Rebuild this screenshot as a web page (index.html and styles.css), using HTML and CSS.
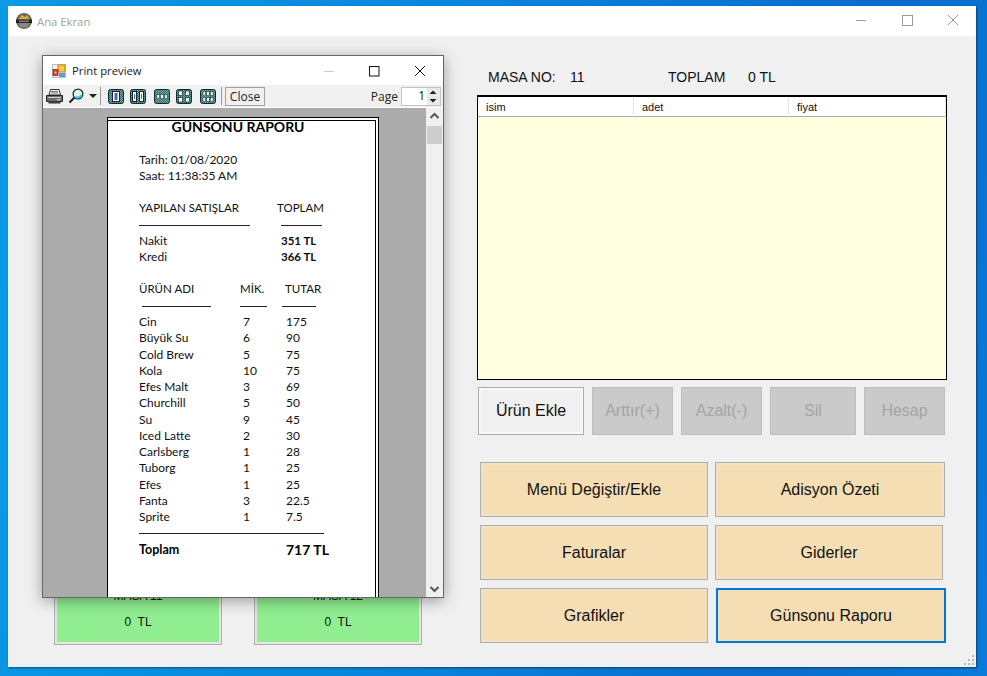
FILE: index.html
```html
<!DOCTYPE html>
<html>
<head>
  <meta charset="UTF-8">
  <title>Ana Ekran</title>
  <link rel="stylesheet" href="styles.css">
</head>
<body>
  <div class="window">
    <div class="titlebar">
      <svg class="app-logo" width="18" height="18" viewBox="0 0 18 18">
        <circle cx="9" cy="9" r="8" fill="#6b675f"/>
        <path d="M3 7.5 L7 3 L10 5 L12 3 L15 7.5 Z" fill="#d9a93f"/>
        <rect x="1" y="7.5" width="16" height="3.5" fill="#24211f"/>
        <rect x="4" y="8.7" width="10" height="1" fill="#aaa"/>
        <path d="M3 11 H15 L12 15.5 H6 Z" fill="#8c8880"/>
      </svg>
      <span class="app-title">Ana Ekran</span>
      <div class="win-controls">
        <svg width="46" height="30" viewBox="0 0 46 30"><path d="M18 14.5 H28" stroke="#999" fill="none"/></svg>
        <svg width="46" height="30" viewBox="0 0 46 30"><rect x="18.5" y="9.5" width="10" height="10" stroke="#999" fill="none"/></svg>
        <svg width="46" height="30" viewBox="0 0 46 30"><path d="M18 9 L28 19 M28 9 L18 19" stroke="#999" fill="none"/></svg>
      </div>
    </div>

    <div class="content">
      <div class="left-col">
        <div class="table-card">
          <div class="table-inner"><span class="table-name">MASA 11</span><span class="table-sum">0&nbsp; TL</span></div>
        </div>
        <div class="table-card">
          <div class="table-inner"><span class="table-name">MASA 12</span><span class="table-sum">0&nbsp; TL</span></div>
        </div>
      </div>

      <div class="right-col">
        <div class="info-row">
          <span class="info-a">MASA NO:</span>
          <span class="info-b">11</span>
          <span class="info-c">TOPLAM</span>
          <span class="info-d">0 TL</span>
        </div>
        <div class="list">
          <div class="list-head">
            <span class="head-cell">isim</span>
            <span class="head-cell">adet</span>
            <span class="head-cell">fiyat</span>
          </div>
        </div>
        <div class="tool-row">
          <button class="btn btn-add">Ürün Ekle</button>
          <button class="btn btn-off w81">Arttır(+)</button>
          <button class="btn btn-off w81">Azalt(-)</button>
          <button class="btn btn-off w86">Sil</button>
          <button class="btn btn-off w81">Hesap</button>
        </div>
        <div class="menu-grid">
          <button class="btn btn-menu">Menü Değiştir/Ekle</button>
          <button class="btn btn-menu">Adisyon Özeti</button>
          <button class="btn btn-menu">Faturalar</button>
          <button class="btn btn-menu btn-short">Giderler</button>
          <button class="btn btn-menu">Grafikler</button>
          <button class="btn btn-menu btn-focus">Günsonu Raporu</button>
        </div>
      </div>
    </div>

    <svg class="grip" width="12" height="12" viewBox="0 0 12 12" fill="#b5b5b5">
      <rect x="8" y="0" width="2" height="2"/><rect x="4" y="4" width="2" height="2"/><rect x="8" y="4" width="2" height="2"/>
      <rect x="0" y="8" width="2" height="2"/><rect x="4" y="8" width="2" height="2"/><rect x="8" y="8" width="2" height="2"/>
    </svg>
  </div>

  <!-- print preview dialog sits over the main window -->
  <div class="preview">
    <div class="pv-title">
      <svg width="14" height="14" viewBox="0 0 14 14">
        <rect x=".5" y=".5" width="13" height="13" fill="#f2f2f2" stroke="#bdbdbd"/>
        <rect x="6" y="1" width="7" height="7" fill="#f7c93e" stroke="#c98a1a"/>
        <rect x="1" y="5.5" width="5" height="6" fill="#d8362a" stroke="#8f1f18" stroke-width=".7"/>
        <rect x="2.5" y="7.5" width="2" height="2" fill="#f3d0c8"/>
        <rect x="7" y="9" width="6" height="4" fill="#5a9be8"/>
      </svg>
      <span class="pv-name">Print preview</span>
      <div class="pv-controls">
        <svg width="46" height="28" viewBox="0 0 46 28"><path d="M19 14.5 H29" stroke="#ccc" fill="none"/></svg>
        <svg width="46" height="28" viewBox="0 0 46 28"><rect x="18.5" y="9.5" width="9.5" height="9.5" stroke="#111" fill="none"/></svg>
        <svg width="46" height="28" viewBox="0 0 46 28"><path d="M18 9 L28 19 M28 9 L18 19" stroke="#111" fill="none"/></svg>
      </div>
    </div>

    <div class="pv-toolbar">
      <svg class="ico-print" width="17" height="15" viewBox="0 0 17 15">
        <path d="M4.5 .5 H13 L14.5 6 H3 Z" fill="#f4f4f4" stroke="#333"/>
        <path d="M5 2.5 H12 M5 4 H12" stroke="#777"/>
        <path d="M.5 6.5 H16.5 V12.5 H.5 Z" fill="#6e6e6e" stroke="#222"/>
        <path d="M2 8.5 H15" stroke="#cfcfcf"/>
        <path d="M2.5 12 H14.5 V14.5 H2.5 Z" fill="#3a3a3a"/>
        <rect x="11" y="10" width="3" height="1.5" fill="#e6d23c"/>
      </svg>
      <svg class="ico-lens" width="16" height="16" viewBox="0 0 16 16">
        <circle cx="10" cy="6" r="4.9" fill="#d8f4fb" stroke="#222" stroke-width="1.2"/>
        <path d="M6.5 8.5 A4.5 4.5 0 0 0 13.5 7" stroke="#35c8e8" stroke-width="2" fill="none"/>
        <path d="M1.5 14.5 L6.5 9.5" stroke="#222" stroke-width="2.2"/>
      </svg>
      <svg class="ico-drop" width="8" height="4" viewBox="0 0 8 4"><path d="M0 0 H8 L4 4 Z" fill="#222"/></svg>
      <span class="tb-sep sep-a"></span>

      <svg class="ico-page gap-a" width="16" height="15" viewBox="0 0 16 15">
        <defs>
          <pattern id="dither" width="2" height="2" patternUnits="userSpaceOnUse">
            <rect width="2" height="2" fill="#2f6f6f"/>
            <rect width="1" height="1" fill="#6fa5a5"/>
            <rect x="1" y="1" width="1" height="1" fill="#6fa5a5"/>
          </pattern>
        </defs>
        <rect x=".5" y=".5" width="15" height="14" rx="2" fill="url(#dither)" stroke="#15282a"/>
        <rect x="4.5" y="2.5" width="7" height="10" fill="#fff" stroke="#15282a"/>
        <rect x="6.5" y="4" width="3" height="7" fill="#5a5ac8"/>
      </svg>
      <svg class="ico-page gap-b" width="16" height="15" viewBox="0 0 16 15">
        <rect x=".5" y=".5" width="15" height="14" rx="2" fill="url(#dither)" stroke="#15282a"/>
        <rect x="2.5" y="2.5" width="4" height="10" fill="#fff" stroke="#15282a"/>
        <rect x="9.5" y="2.5" width="4" height="10" fill="#fff" stroke="#15282a"/>
        <rect x="4" y="5" width="1" height="5" fill="#5a5ac8"/>
        <rect x="11" y="5" width="1" height="5" fill="#5a5ac8"/>
      </svg>
      <svg class="ico-page gap-a" width="16" height="15" viewBox="0 0 16 15">
        <rect x=".5" y=".5" width="15" height="14" rx="2" fill="url(#dither)" stroke="#15282a"/>
        <rect x="3" y="5.5" width="2.4" height="4" fill="#fff" stroke="#15282a" stroke-width=".5"/>
        <rect x="6.8" y="5.5" width="2.4" height="4" fill="#fff" stroke="#15282a" stroke-width=".5"/>
        <rect x="10.6" y="5.5" width="2.4" height="4" fill="#fff" stroke="#15282a" stroke-width=".5"/>
      </svg>
      <svg class="ico-page gap-b" width="16" height="15" viewBox="0 0 16 15">
        <rect x=".5" y=".5" width="15" height="14" rx="2" fill="url(#dither)" stroke="#15282a"/>
        <rect x="2.5" y="2" width="4" height="4.5" fill="#fff" stroke="#15282a" stroke-width=".7"/>
        <rect x="9.5" y="2" width="4" height="4.5" fill="#fff" stroke="#15282a" stroke-width=".7"/>
        <rect x="2.5" y="8.5" width="4" height="4.5" fill="#fff" stroke="#15282a" stroke-width=".7"/>
        <rect x="9.5" y="8.5" width="4" height="4.5" fill="#fff" stroke="#15282a" stroke-width=".7"/>
      </svg>
      <svg class="ico-page gap-last" width="16" height="15" viewBox="0 0 16 15">
        <rect x=".5" y=".5" width="15" height="14" rx="2" fill="url(#dither)" stroke="#15282a"/>
        <rect x="3" y="2.5" width="2.4" height="4" fill="#fff" stroke="#15282a" stroke-width=".5"/>
        <rect x="6.8" y="2.5" width="2.4" height="4" fill="#fff" stroke="#15282a" stroke-width=".5"/>
        <rect x="10.6" y="2.5" width="2.4" height="4" fill="#fff" stroke="#15282a" stroke-width=".5"/>
        <rect x="3" y="8.5" width="2.4" height="4" fill="#fff" stroke="#15282a" stroke-width=".5"/>
        <rect x="6.8" y="8.5" width="2.4" height="4" fill="#fff" stroke="#15282a" stroke-width=".5"/>
        <rect x="10.6" y="8.5" width="2.4" height="4" fill="#fff" stroke="#15282a" stroke-width=".5"/>
      </svg>
      <span class="tb-sep sep-b"></span>
      <span class="tb-close">Close</span>

      <span class="tb-page">Page</span>
      <div class="spin">
        <span class="spin-val">1</span>
        <div class="spin-btns">
          <svg width="12" height="8" viewBox="0 0 12 8"><path d="M2.5 6 L6 2.5 L9.5 6 Z" fill="#222"/></svg>
          <svg width="12" height="8" viewBox="0 0 12 8"><path d="M2.5 2 L6 5.5 L9.5 2 Z" fill="#222"/></svg>
        </div>
      </div>
    </div>

    <div class="pv-body">
      <div class="pv-stage">
        <div class="paper">
          <div class="rp-title">GÜNSONU RAPORU</div>
          <div class="rp-line"></div>
          <div class="rp-line">Tarih: 01/08/2020</div>
          <div class="rp-line">Saat: 11:38:35 AM</div>
          <div class="rp-line"></div>
          <div class="rp-sum rp-caps"><span>YAPILAN SATIŞLAR</span><span>TOPLAM</span></div>
          <div class="rp-rule"><i class="r-sales"></i><i class="r-total"></i></div>
          <div class="rp-sum"><span>Nakit</span><b class="sum-val">351 TL</b></div>
          <div class="rp-sum"><span>Kredi</span><b class="sum-val">366 TL</b></div>
          <div class="rp-line"></div>
          <div class="rp-row rp-head rp-caps"><span>ÜRÜN ADI</span><span>MİK.</span><span>TUTAR</span></div>
          <div class="rp-rule"><i class="r-name"></i><i class="r-qty"></i><i class="r-amt"></i></div>
          <div class="rp-row"><span>Cin</span><span>7</span><span>175</span></div>
          <div class="rp-row"><span>Büyük Su</span><span>6</span><span>90</span></div>
          <div class="rp-row"><span>Cold Brew</span><span>5</span><span>75</span></div>
          <div class="rp-row"><span>Kola</span><span>10</span><span>75</span></div>
          <div class="rp-row"><span>Efes Malt</span><span>3</span><span>69</span></div>
          <div class="rp-row"><span>Churchill</span><span>5</span><span>50</span></div>
          <div class="rp-row"><span>Su</span><span>9</span><span>45</span></div>
          <div class="rp-row"><span>Iced Latte</span><span>2</span><span>30</span></div>
          <div class="rp-row"><span>Carlsberg</span><span>1</span><span>28</span></div>
          <div class="rp-row"><span>Tuborg</span><span>1</span><span>25</span></div>
          <div class="rp-row"><span>Efes</span><span>1</span><span>25</span></div>
          <div class="rp-row"><span>Fanta</span><span>3</span><span>22.5</span></div>
          <div class="rp-row"><span>Sprite</span><span>1</span><span>7.5</span></div>
          <div class="rp-rule"><i class="r-all"></i></div>
          <div class="rp-row rp-foot"><b>Toplam</b><span></span><b class="foot-val">717 TL</b></div>
        </div>
      </div>
      <div class="pv-scroll">
        <svg width="17" height="16" viewBox="0 0 17 16"><path d="M4.5 10 L8.5 6 L12.5 10" stroke="#555" stroke-width="2" fill="none"/></svg>
        <div class="pv-thumb"></div>
        <svg class="scroll-down" width="17" height="16" viewBox="0 0 17 16"><path d="M4.5 6 L8.5 10 L12.5 6" stroke="#555" stroke-width="2" fill="none"/></svg>
      </div>
    </div>
  </div>
</body>
</html>
```

FILE: styles.css
```css
html, body {
  margin: 0;
  height: 100%;
}

body {
  position: relative;
  width: 987px;
  height: 676px;
  overflow: hidden;
  background: linear-gradient(100deg, #0a9be6 0%, #0a84dc 45%, #0a6ccc 80%, #0a7ad8 100%);
  font-family: "Liberation Sans", Arial, sans-serif;
}

/* main window */
.window {
  position: absolute;
  left: 8px;
  top: 6px;
  width: 968px;
  height: 661px;
  background: #f0f0f0;
  box-shadow: 1px 1px 2px rgba(0, 0, 0, 0.45);
  display: flex;
  flex-direction: column;
}

.titlebar {
  height: 30px;
  background: #fff;
  display: flex;
  align-items: center;
  padding-left: 7px;
  flex-shrink: 0;
}

.app-title {
  margin-left: 4px;
  font-family: "Open Sans", sans-serif;
  font-size: 11.3px;
  color: #a0a0a0;
}

.win-controls {
  margin-left: auto;
  display: flex;
}

.win-controls svg {
  display: block;
}

.content {
  flex: 1;
  display: grid;
  grid-template-columns: 469px 1fr;
  min-height: 0;
}

/* green table cards, mostly under the preview */
.left-col {
  display: flex;
  align-items: flex-end;
  gap: 32px;
  padding: 0 0 22px 46px;
}

.table-card {
  width: 168px;
  height: 85px;
  box-sizing: border-box;
  border: 1px solid #adadad;
  padding: 2px;
  background: #e6e6e6;
}

.table-inner {
  height: 100%;
  background: #90ee90;
  display: flex;
  flex-direction: column;
  align-items: center;
  font-size: 12px;
  color: #111;
}

.table-name {
  margin-top: 26px;
}

.table-sum {
  margin-top: 12px;
}

.right-col {
  padding-top: 32px;
}

.info-row {
  display: flex;
  height: 18px;
  align-items: center;
  font-size: 14px;
  color: #111;
  margin-bottom: 9px;
}

.info-a { margin-left: 11px; width: 82px; }
.info-b { width: 98px; }
.info-c { width: 80px; }

.list {
  width: 470px;
  height: 285px;
  box-sizing: border-box;
  border: 1px solid #000;
  border-top-width: 2px;
  background: #ffffe0;
}

.list-head {
  display: grid;
  grid-template-columns: 156px 155px 1fr;
  height: 20px;
  background: #fff;
  border-bottom: 1px solid #a8a8a8;
  box-sizing: border-box;
}

.head-cell {
  font-size: 11px;
  line-height: 20px;
  padding-left: 8px;
  color: #111;
  border-right: 1px solid #e5e5e5;
}

.tool-row {
  display: flex;
  gap: 8px;
  margin: 7px 0 0 1px;
}

.btn {
  display: block;
  box-sizing: border-box;
  padding: 0;
  font-family: "Liberation Sans", Arial, sans-serif;
  font-size: 16px;
  color: #111;
  border: 1px solid #adadad;
}

.tool-row .btn {
  height: 48px;
}

.btn-add {
  width: 106px;
  background: #f0f0f0;
  box-shadow: inset 0 0 0 2px #f8f8f8;
}

.btn-off {
  background: #cacaca;
  color: #a4a4a4;
  border-color: #bdbdbd;
}

.w81 { width: 81px; }
.w86 { width: 86px; }

.menu-grid {
  display: grid;
  grid-template-columns: 228px 230px;
  grid-auto-rows: 55px;
  gap: 8px 7px;
  margin: 27px 0 0 3px;
}

.btn-menu {
  background: #f5deb3;
  box-shadow: inset 0 0 0 2px #f2e2c4;
}

.btn-short {
  width: 228px;
}

.btn-focus {
  width: 230px;
  margin-left: 1px;
  border: 2px solid #0078d7;
  box-shadow: none;
}

.grip {
  position: absolute;
  right: 0;
  bottom: 0;
}

/* print preview dialog */
.preview {
  position: absolute;
  left: 42px;
  top: 55px;
  width: 402px;
  height: 543px;
  box-sizing: border-box;
  border: 1px solid #666;
  background: #fff;
  box-shadow: 0 3px 14px rgba(0, 0, 0, 0.35);
  display: flex;
  flex-direction: column;
  overflow: hidden;
}

.pv-title {
  height: 29px;
  display: flex;
  align-items: center;
  padding-left: 9px;
  flex-shrink: 0;
}

.pv-name {
  margin-left: 6px;
  font-family: "Open Sans", sans-serif;
  font-size: 11.3px;
  color: #222;
}

.pv-controls {
  margin-left: auto;
  display: flex;
}

.pv-toolbar {
  height: 22px;
  background: #f0f0f0;
  display: flex;
  align-items: center;
  flex-shrink: 0;
  font-family: "Open Sans", sans-serif;
  font-size: 12px;
  color: #222;
  border-bottom: 1px solid #fff;
}

.ico-print { margin-left: 3px; }
.ico-lens { margin-left: 5px; }
.ico-drop { margin-left: 5px; }

.gap-a { margin-right: 6px; }
.gap-b { margin-right: 8px; }
.gap-last { margin-right: 5px; }

.tb-sep {
  width: 1px;
  height: 18px;
  background: #9a9a9a;
}

.sep-a { margin: 0 7px 0 3px; }
.sep-b { margin: 0 3px 0 0; }

.tb-close {
  height: 19px;
  line-height: 18px;
  width: 40px;
  box-sizing: border-box;
  text-align: center;
  border: 1px solid #a0a0a0;
}

.tb-page {
  margin-left: auto;
  margin-right: 3px;
}

.spin {
  width: 40px;
  height: 19px;
  box-sizing: border-box;
  border: 1px solid #c4c4c4;
  background: #fff;
  display: flex;
  margin-right: 2px;
}

.spin-val {
  flex: 1;
  text-align: right;
  padding-right: 2px;
  line-height: 16px;
  color: #111;
}

.spin-btns {
  width: 13px;
  background: #e9e9e9;
  display: flex;
  flex-direction: column;
  justify-content: space-between;
}

.spin-btns svg {
  display: block;
}

.pv-body {
  flex: 1;
  display: flex;
  min-height: 0;
}

.pv-stage {
  flex: 1;
  background: #ababab;
  padding: 9px 0 0 64px;
  overflow: hidden;
}

.pv-scroll {
  width: 17px;
  background: #f0f0f0;
  display: flex;
  flex-direction: column;
  position: relative;
}

.pv-scroll svg {
  flex-shrink: 0;
}

.pv-thumb {
  height: 18px;
  margin: 2px 1px 0;
  background: #cdcdcd;
}

.scroll-down {
  margin-top: auto;
}

.paper {
  width: 272px;
  height: 520px;
  box-sizing: border-box;
  border: 1px solid #000;
  background: #fff;
  box-shadow: inset -2px 2px 0 #fff, inset -3px 3px 0 #000;
  padding: 1px 0 0 31px;
  font-family: Lato, sans-serif;
  font-size: 12px;
  line-height: 16.25px;
  color: #111;
}

.rp-title {
  width: 260px;
  margin-left: -31px;
  text-align: center;
  font-size: 14px;
  font-weight: 700;
  color: #000;
}

.rp-line {
  height: 16.25px;
}

.rp-sum {
  display: grid;
  grid-template-columns: 138px 1fr;
}

.rp-caps {
  font-size: 11.5px;
}

.sum-val {
  padding-left: 4px;
  font-size: 11.5px;
}

.rp-row {
  display: grid;
  grid-template-columns: 104px 43px 1fr;
  height: 16.25px;
}

.rp-head {
  grid-template-columns: 101px 45px 1fr;
  line-height: 14px;
}

.rp-rule {
  position: relative;
  height: 16.25px;
}

.rp-rule i {
  position: absolute;
  top: 8px;
  height: 1px;
  background: #222;
}

.r-sales { left: 0; width: 111px; }
.r-total { left: 142px; width: 41px; }
.r-name { left: 3px; width: 69px; }
.r-qty { left: 101px; width: 27px; }
.r-amt { left: 143px; width: 34px; }
.r-all { left: 0; width: 185px; }

.rp-foot {
  color: #000;
}

.rp-foot b:first-child {
  font-size: 12.5px;
}

.foot-val {
  font-size: 14px;
}
```
